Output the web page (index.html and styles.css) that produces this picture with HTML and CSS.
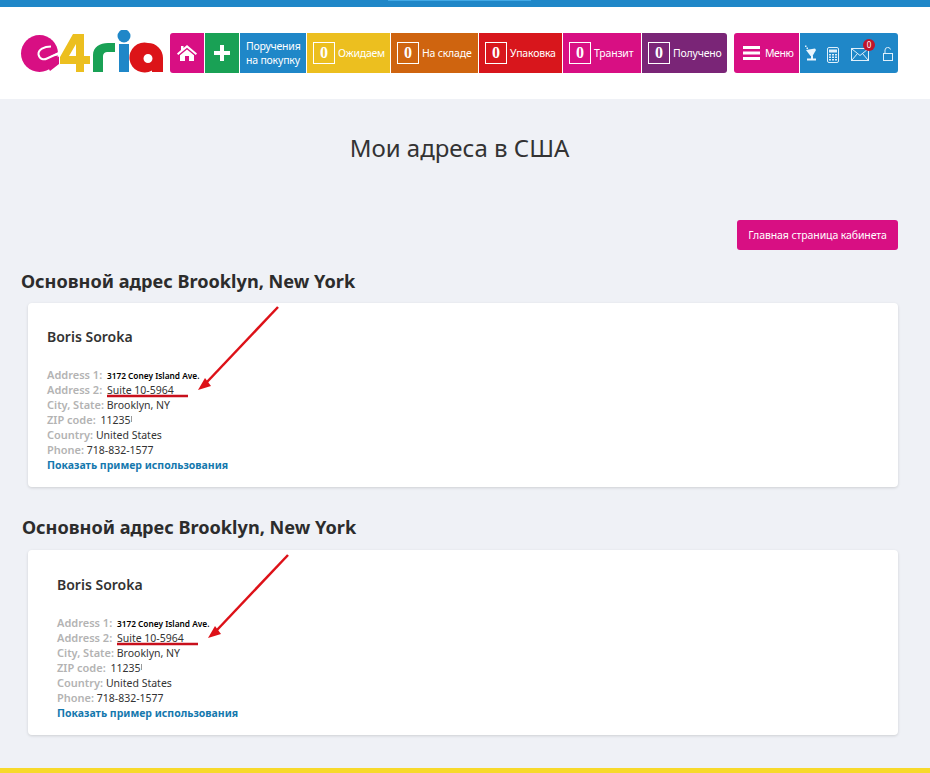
FILE: index.html
```html
<!DOCTYPE html>
<html lang="ru">
<head>
<meta charset="utf-8">
<title>Мои адреса в США</title>
<link rel="stylesheet" href="styles.css">
</head>
<body>
<div class="topbar"><span class="toptab"></span></div>
<header class="header">
  <svg class="logo" width="146" height="44" viewBox="20 30 146 44" aria-label="e4ria">
    <circle cx="39.500" cy="53.500" r="18.500" fill="#d80f83"/>
    <path d="M45 62L59 56.500L59 64L50 71Z" fill="#d80f83"/>
    <path d="M51 46.500C44 46.500 38 49.500 38.500 54.500C39.500 59.500 44 60 47 58.500L59 53" fill="none" stroke="#fff" stroke-width="2"/>
    <path d="M50 56.500L61 51V55Z" fill="#fff"/>
    <path d="M73 34H84V56H90V64H84V72H76V64H60V57ZM76 44L69 56H76Z" fill="#ecbf1f" fill-rule="evenodd"/>
    <path d="M93 72V55C93 47 100 43 108 43H115V52H108C105 52 103 53 103 57V72Z" fill="#19a155"/>
    <circle cx="124" cy="36" r="6.500" fill="#1f87c8"/>
    <rect x="119" y="44" width="10" height="28" fill="#1f87c8"/>
    <path d="M148 43A15 15 0 0 1 163 58V72H152V70.500A15 15 0 1 1 148 43ZM148 54A4.500 4.500 0 1 0 148 63A4.500 4.500 0 1 0 148 54Z" fill="#dc1418" fill-rule="evenodd"/>
  </svg>
  <nav class="nav">
    <div class="group">
      <a class="btn square pink round-l">
        <svg width="20" height="16" viewBox="0 0 20 16"><path d="M10 0L20 8.500L18.800 10L10 2.800L1.200 10L0 8.500L4 5V1H6.500V2.900Z" fill="#fff"/><path d="M10 4.500L17 10.200V16H12V11H8V16H3V10.200Z" fill="#fff"/></svg>
      </a>
      <a class="btn square green">
        <svg width="16" height="16" viewBox="0 0 16 16"><path d="M6 0H10V6H16V10H10V16H6V10H0V6H6Z" fill="#fff"/></svg>
      </a>
      <a class="btn blue order">Поручения<br>на покупку</a>
      <a class="btn yellow w83"><b class="count">0</b>Ожидаем</a>
      <a class="btn orange w87"><b class="count">0</b>На складе</a>
      <a class="btn red w83"><b class="count">0</b>Упаковка</a>
      <a class="btn pink w78"><b class="count">0</b>Транзит</a>
      <a class="btn purple w85 round-r"><b class="count">0</b>Получено</a>
    </div>
    <div class="group">
      <a class="btn pink menu round-l">
        <svg width="17" height="14" viewBox="0 0 17 14"><path d="M0 0H17V3H0ZM0 5.500H17V8.500H0ZM0 11H17V14H0Z" fill="#fff"/></svg>
        Меню
      </a>
      <div class="btn blue tools round-r">
        <svg class="sat" width="13" height="16" viewBox="0 0 13 16"><path d="M1 0.500H2.500V2H1ZM2.500 2.500H4V4H2.500Z" fill="#dff0fb"/><path d="M2 5L11 3.500L12 5L8.500 11H6.500Z" fill="#eaf6fd"/><path d="M7 10.500H9V13.500H12V15.500H3V13.500H7Z" fill="#eaf6fd"/></svg>
        <svg class="calc" width="12" height="16" viewBox="0 0 12 16"><rect x="0.500" y="0.500" width="11" height="15" rx="1.500" fill="none" stroke="#dff0fb"/><path d="M2 2.500H10V5.500H2ZM2 7H4V8.500H2ZM5 7H7V8.500H5ZM8 7H10V8.500H8ZM2 9.500H4V11H2ZM5 9.500H7V11H5ZM8 9.500H10V11H8ZM2 12H4V13.500H2ZM5 12H7V13.500H5ZM8 12H10V13.500H8Z" fill="#dff0fb"/></svg>
        <span class="mail">
          <svg width="18" height="13" viewBox="0 0 18 13" fill="none" stroke="#dff0fb"><rect x="0.500" y="0.500" width="17" height="12"/><path d="M1 1L9 7.500L17 1M1 12L6.500 5.500M17 12L11.500 5.500"/></svg>
          <span class="badge">0</span>
        </span>
        <svg class="lock" width="10" height="14" viewBox="0 0 10 14" fill="none" stroke="#dff0fb"><rect x="0.500" y="6.500" width="9" height="7"/><path d="M2 6.500V3A2.800 2.800 0 0 1 7.500 2.500"/></svg>
      </div>
    </div>
  </nav>
</header>
<main class="main">
  <h1 class="title">Мои адреса в США</h1>
  <div class="actions"><a class="cabinet">Главная страница кабинета</a></div>

  <h2 class="section">Основной адрес Brooklyn, New York</h2>
  <section class="card">
    <h3 class="name">Boris Soroka</h3>
    <p class="line"><span class="label">Address 1:</span> <span class="pasted">3172 Coney Island Ave.</span></p>
    <p class="line"><span class="label">Address 2:</span> <span class="nudge">Suite 10-5964</span></p>
    <p class="line"><span class="label">City, State:</span> Brooklyn, NY</p>
    <p class="line"><span class="label">ZIP code:</span> <span class="nudge">11235</span><span class="cut"></span></p>
    <p class="line"><span class="label">Country:</span> United States</p>
    <p class="line"><span class="label">Phone:</span> 718-832-1577</p>
    <a class="usage">Показать пример использования</a>
    <svg class="mark" width="200" height="100" viewBox="0 0 200 100">
      <path d="M80 4L9 79" stroke="#dd1118" stroke-width="2.500" fill="none"/>
      <path d="M0 87L7 75L13 83Z" fill="#dd1118"/>
      <path d="M-91 93H-10" stroke="#c8101c" stroke-width="2.500" fill="none"/>
    </svg>
  </section>

  <h2 class="section second">Основной адрес Brooklyn, New York</h2>
  <section class="card shifted">
    <h3 class="name">Boris Soroka</h3>
    <p class="line"><span class="label">Address 1:</span> <span class="pasted">3172 Coney Island Ave.</span></p>
    <p class="line"><span class="label">Address 2:</span> <span class="nudge">Suite 10-5964</span></p>
    <p class="line"><span class="label">City, State:</span> Brooklyn, NY</p>
    <p class="line"><span class="label">ZIP code:</span> <span class="nudge">11235</span><span class="cut"></span></p>
    <p class="line"><span class="label">Country:</span> United States</p>
    <p class="line"><span class="label">Phone:</span> 718-832-1577</p>
    <a class="usage">Показать пример использования</a>
    <svg class="mark" width="200" height="100" viewBox="0 0 200 100">
      <path d="M80 4L9 79" stroke="#dd1118" stroke-width="2.500" fill="none"/>
      <path d="M0 87L7 75L13 83Z" fill="#dd1118"/>
      <path d="M-91 93H-10" stroke="#c8101c" stroke-width="2.500" fill="none"/>
    </svg>
  </section>
</main>
<div class="footbar"></div>
</body>
</html>
```
FILE: styles.css
```css
* { box-sizing: border-box; }
html, body { margin: 0; padding: 0; }
body {
  height: 773px;
  overflow: hidden;
  background: #eff1f6;
  font-family: "Noto Sans", "Open Sans", sans-serif;
  color: #333;
  display: flex;
  flex-direction: column;
}
.topbar { height: 7px; background: #1f87c8; position: relative; flex: none; }
.toptab { position: absolute; left: 388px; top: 0; width: 143px; height: 1px; background: #41a9e6; }
.header {
  height: 92px;
  flex: none;
  background: #fff;
  display: flex;
  align-items: flex-start;
  padding: 26px 0 0 20px;
}
.logo { flex: none; margin-top: -3px; }
.nav { display: flex; gap: 7px; margin-left: 4px; }
.group { display: flex; gap: 1px; }
.btn {
  height: 40px;
  display: flex;
  align-items: center;
  color: #fff;
  font-family: "Noto Sans", sans-serif;
  font-size: 10.500px;
  line-height: 14px;
  white-space: nowrap;
  letter-spacing: -0.2px;
}
.square { width: 34px; justify-content: center; }
.pink { background: #d80f83; }
.green { background: #19a155; }
.blue { background: #1f87c8; }
.yellow { background: #ecbf1f; }
.orange { background: #cf640f; }
.red { background: #d8161c; }
.purple { background: #7a2577; }
.round-l { border-radius: 3px 0 0 3px; }
.round-r { border-radius: 0 3px 3px 0; }
.order { width: 66px; padding-left: 6px; }
.w83 { width: 83px; padding-left: 6px; }
.w87 { width: 87px; padding-left: 6px; }
.w78 { width: 78px; padding-left: 6px; }
.w85 { width: 85px; padding-left: 6px; }
.count {
  width: 22px;
  height: 22px;
  margin-right: 3px;
  border: 1px solid #fff;
  display: flex;
  align-items: center;
  justify-content: center;
  font-family: "Liberation Serif", serif;
  font-size: 16px;
  font-weight: 700;
  flex: none;
}
.menu { width: 65px; padding-left: 9px; gap: 5px; letter-spacing: -0.4px; }
.tools { width: 98px; padding-left: 4px; }
.sat { flex: none; }
.calc { flex: none; margin: 3px 0 0 10px; }
.mail { position: relative; display: flex; margin: 3px 0 0 12px; }
.lock { flex: none; margin: 1px 0 0 14px; }
.badge {
  position: absolute;
  left: 12px;
  top: -9px;
  width: 12px;
  height: 12px;
  border-radius: 50%;
  background: #c0152a;
  color: #fff;
  font-size: 8px;
  line-height: 12px;
  text-align: center;
  letter-spacing: 0;
}
.main { flex: 1; padding: 0 32px 0 21px; }
.footbar { height: 5px; flex: none; background: #f7d92a; }
.title {
  margin: 31px 0 0;
  font-family: "Noto Sans", sans-serif;
  font-weight: 400;
  font-size: 24px;
  line-height: 36px;
  text-align: center;
  color: #333;
}
.actions { display: flex; justify-content: flex-end; margin-top: 54px; }
.cabinet {
  width: 161px;
  height: 30px;
  background: #d80f83;
  color: #fff;
  border-radius: 3px;
  font-size: 10.500px;
  letter-spacing: -0.1px;
  display: flex;
  align-items: center;
  justify-content: center;
}
.section {
  margin: 18px 0 0;
  font-size: 18.150px;
  line-height: 26px;
  font-weight: 700;
  color: #2c2c2c;
}
.section.second { margin: 27px 0 0 1px; }
.card {
  position: relative;
  margin: 9px 0 0 7px;
  height: 184px;
  padding: 25px 19px 0;
  background: #fff;
  border-radius: 4px;
  box-shadow: 0 1px 3px rgba(0, 0, 0, 0.14);
}
.second + .card { margin-top: 10px; height: 185px; }
.shifted { padding: 26px 29px 0; }
.name {
  margin: 0 0 22px;
  font-size: 14px;
  line-height: 18px;
  font-weight: 600;
  color: #333;
}
.line {
  margin: 0;
  font-size: 10.500px;
  line-height: 15px;
  height: 15px;
  color: #333;
  white-space: nowrap;
}
.label { font-size: 11px; line-height: 1; font-weight: 600; color: #b3b3b3; }
.pasted { font-size: 8.300px; line-height: 1; font-weight: 600; color: #000; margin-left: 2px; }
.nudge { margin-left: 2px; }
.cut { display: inline-block; width: 1px; height: 6px; background: #999; vertical-align: 2px; margin-left: 1px; }
.usage {
  display: block;
  font-size: 10.500px;
  line-height: 15px;
  font-weight: 700;
  color: #1478ae;
  white-space: nowrap;
}
.mark {
  position: absolute;
  left: 170px;
  top: 0;
  overflow: visible;
}
.shifted .mark { left: 180px; top: 1px; }
```
